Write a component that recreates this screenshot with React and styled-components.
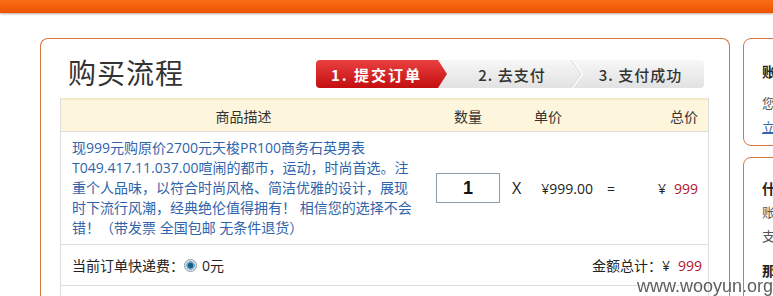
import React from 'react';
import styled, { createGlobalStyle } from 'styled-components';

const GlobalStyle = createGlobalStyle`
  html, body {
    margin: 0;
    padding: 0;
    background: #fff;
    overflow: hidden;
  }
  body {
    width: 773px;
    height: 296px;
    font-family: "Open Sans", "Noto Sans CJK SC", sans-serif;
    color: #333;
  }
`;

const TopBar = styled.div`
  height: 13px;
  background: linear-gradient(#fb6d16, #ec5300);
  box-shadow: 0 1px 2px rgba(90, 60, 40, 0.45);
`;

const Page = styled.div`
  display: flex;
  gap: 13px;
  padding: 25px 0 0 40px;
  width: 1100px;
`;

const Panel = styled.div`
  box-sizing: border-box;
  width: 690px;
  height: 300px;
  border: 1px solid #d8773f;
  border-bottom: none;
  border-radius: 8px 8px 0 0;
  padding: 0 20px 0 19px;
`;

const PanelHead = styled.div`
  height: 59px;
  display: flex;
  align-items: flex-start;
  justify-content: space-between;
`;

const Title = styled.h1`
  margin: 15px 0 0 8px;
  font-family: "Noto Sans CJK SC", sans-serif;
  font-weight: 400;
  font-size: 28px;
  line-height: 36px;
  letter-spacing: 1px;
  color: #333;
`;

const Steps = styled.div`
  margin-top: 21px;
  margin-right: 5px;
  width: 388px;
  height: 28px;
  display: flex;
  border-radius: 4px;
  background: linear-gradient(#f7f7f7, #e2e2e2);
  overflow: hidden;
`;

const Step = styled.div`
  height: 28px;
  width: ${p => p.$w}px;
  flex: none;
  display: flex;
  align-items: center;
  justify-content: center;
  font-family: "Noto Sans CJK SC", sans-serif;
  font-size: 15px;
  font-weight: ${p => (p.$active ? 700 : 500)};
  letter-spacing: ${p => (p.$active ? 2 : 1)}px;
  color: ${p => (p.$active ? '#fff' : '#333')};
  background: ${p => (p.$active ? 'linear-gradient(#ea4040, #c30f10)' : 'transparent')};
  clip-path: ${p => (p.$active ? 'polygon(0 0, 122px 0, 131px 50%, 122px 100%, 0 100%)' : 'none')};
  padding-right: ${p => p.$pr || 0}px;
  box-sizing: border-box;
`;

const Chevron = styled.svg`
  flex: none;
  width: 12px;
  height: 28px;
  margin: 0 -6px;
`;

const Table = styled.div`
  border: 1px solid #ddd;
  border-top: none;
`;

const Head = styled.div`
  display: grid;
  grid-template-columns: 365px 84px 1fr;
  height: 31px;
  align-items: center;
  background: #fdf6dc;
  border-top: 2px solid #f3e8c8;
  border-bottom: 1px solid #ddd;
  font-family: "Noto Sans CJK SC", sans-serif;
  font-size: 14px;
  color: #333;
`;

const HeadCell = styled.div`
  padding-left: ${p => p.$pl || 0}px;
  padding-right: ${p => p.$pr || 0}px;
  display: flex;
  justify-content: ${p => (p.$split ? 'space-between' : 'center')};
`;

const ItemRow = styled.div`
  display: grid;
  grid-template-columns: 365px 84px 1fr;
  height: 112px;
  align-items: center;
  border-bottom: 1px solid #ddd;
`;

const Desc = styled.div`
  padding: 0 0 0 11px;
  font-family: "Open Sans", "Noto Sans CJK SC", sans-serif;
  font-size: 14px;
  line-height: 20px;
  color: #2f64ab;
  white-space: nowrap;
`;

const QtyCell = styled.div`
  display: flex;
  justify-content: center;
`;

const QtyInput = styled.input`
  box-sizing: border-box;
  width: 64px;
  height: 30px;
  border: 1px solid #8a9aaa;
  text-align: center;
  font-family: "Liberation Sans", Arial, sans-serif;
  font-size: 18px;
  font-weight: 700;
  color: #111;
  outline: none;
  padding: 0;
`;

const PriceLine = styled.div`
  display: flex;
  align-items: center;
  padding: 0 10px 0 2px;
  font-size: 14px;
  color: #222;
`;

const Op = styled.span`
  font-family: "Open Sans", sans-serif;
  font-size: ${p => p.$size || 14}px;
  margin-left: ${p => p.$ml || 0}px;
`;

const Money = styled.span`
  font-family: "Open Sans", "Noto Sans CJK SC", sans-serif;
  font-size: 14px;
  margin-left: ${p => p.$ml || 0}px;
`;

const Red = styled.span`
  color: #b3152d;
  margin-left: 8px;
`;

const Spacer = styled.div`
  flex: 1;
`;

const FootRow = styled.div`
  height: 40px;
  display: flex;
  align-items: center;
  padding: 0 6px 0 11px;
  border-bottom: 1px solid #ddd;
  font-family: "Noto Sans CJK SC", sans-serif;
  font-size: 14px;
  color: #222;
`;

const Radio = styled.span`
  display: inline-block;
  width: 11px;
  height: 11px;
  border-radius: 50%;
  border: 1px solid #8c9aa8;
  background: radial-gradient(circle, #1d5f86 0 2.5px, #6aa7cf 3px 4px, #dfe7ee 4.5px);
  margin: 0 5px 0 0;
`;

const Num = styled.span`
  font-family: "Open Sans", sans-serif;
`;

const EmptyRow = styled.div`
  height: 40px;
`;

const Side = styled.div`
  display: flex;
  flex-direction: column;
  gap: 11px;
`;

const SideBox = styled.div`
  box-sizing: border-box;
  width: 240px;
  height: ${p => p.$h}px;
  border: 1px solid #d8773f;
  border-radius: 8px;
  padding: ${p => p.$pt}px 0 0 18px;
  font-family: "Noto Sans CJK SC", sans-serif;
  font-size: 13px;
  color: #555;
`;

const SideTitle = styled.div`
  font-weight: 700;
  font-size: 14px;
  color: #222;
  line-height: 20px;
  margin-top: ${p => p.$mt || 0}px;
  margin-bottom: ${p => p.$mb || 0}px;
`;

const SideText = styled.div`
  line-height: 24px;
`;

const SideLink = styled.a`
  display: block;
  color: #2f64ab;
  text-decoration: underline;
  line-height: 24px;
`;

const Watermark = styled.div`
  position: fixed;
  right: 0;
  bottom: 0;
  font-family: "Liberation Sans", Arial, sans-serif;
  font-size: 18px;
  color: #5e5e5e;
  line-height: 20px;
  text-shadow: 0 0 2px #fff;
`;

const descLines = [
  '现999元购原价2700元天梭PR100商务石英男表',
  'T049.417.11.037.00喧闹的都市，运动，时尚首选。注',
  '重个人品味，以符合时尚风格、简洁优雅的设计，展现',
  '时下流行风潮，经典绝伦值得拥有！ 相信您的选择不会',
  '错！（带发票 全国包邮 无条件退货）',
];

const ChevronMark = () => (
  <Chevron viewBox="0 0 12 28">
    <polyline points="1,0 11,14 1,28" fill="none" stroke="#fff" strokeWidth="2" />
    <polyline points="0,0 10,14 0,28" fill="none" stroke="#d6d6d6" strokeWidth="1" />
  </Chevron>
);

export default function App() {
  return (
    <>
      <GlobalStyle />
      <TopBar />
      <Page>
        <Panel>
          <PanelHead>
            <Title>购买流程</Title>
            <Steps>
              <Step $active $w={131} $pr={10}>1. 提交订单</Step>
              <Step $w={130}>2. 去支付</Step>
              <ChevronMark />
              <Step $w={127}>3. 支付成功</Step>
            </Steps>
          </PanelHead>
          <Table>
            <Head>
              <HeadCell>商品描述</HeadCell>
              <HeadCell>数量</HeadCell>
              <HeadCell $split $pl={24} $pr={10}>
                <span>单价</span>
                <span>总价</span>
              </HeadCell>
            </Head>
            <ItemRow>
              <Desc>
                {descLines.map((l, i) => (
                  <div key={i}>{l}</div>
                ))}
              </Desc>
              <QtyCell>
                <QtyInput defaultValue="1" />
              </QtyCell>
              <PriceLine>
                <Op $size={16}>X</Op>
                <Money $ml={20}>¥999.00</Money>
                <Op $ml={14}>=</Op>
                <Spacer />
                <Money>¥<Red>999</Red></Money>
              </PriceLine>
            </ItemRow>
            <FootRow>
              当前订单快递费：<Radio /><Num>0</Num>元
              <Spacer />
              金额总计：<Num>¥</Num><Red><Num>999</Num></Red>
            </FootRow>
            <EmptyRow />
          </Table>
        </Panel>
        <Side>
          <SideBox $h={108} $pt={22}>
            <SideTitle $mb={10}>账户余额</SideTitle>
            <SideText>您的账户余额：0元</SideText>
            <SideLink>立即充值</SideLink>
          </SideBox>
          <SideBox $h={200} $pt={20}>
            <SideTitle $mb={2}>什么是账户余额？</SideTitle>
            <SideText>账户余额是您在本站的预存款</SideText>
            <SideText>支付时可直接使用余额付款</SideText>
            <SideTitle $mt={12}>那么如何充值？</SideTitle>
          </SideBox>
        </Side>
      </Page>
      <Watermark>www.wooyun.org</Watermark>
    </>
  );
}
